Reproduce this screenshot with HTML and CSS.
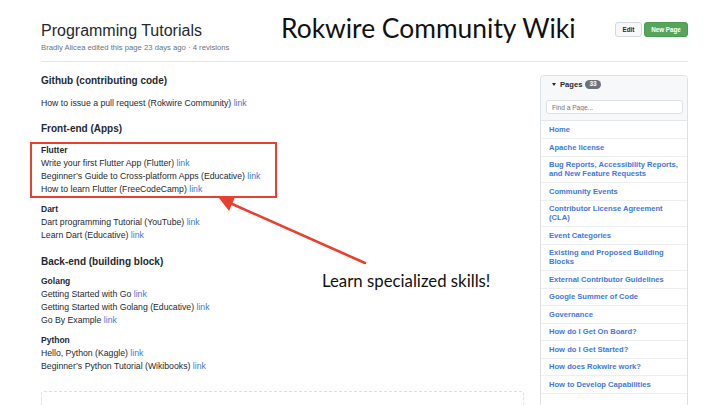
FILE: index.html
```html
<!DOCTYPE html>
<html lang="en">
<head>
<meta charset="utf-8">
<title>Programming Tutorials · Rokwire Community Wiki</title>
<link rel="stylesheet" href="styles.css">
</head>
<body>
<div class="page">
  <header class="head">
    <div class="title-block">
      <h1 class="title">Programming Tutorials</h1>
      <div class="meta">Bradly Alicea edited this page 23 days ago · 4 revisions</div>
    </div>
    <div class="actions">
      <button class="btn">Edit</button>
      <button class="btn btn-green">New Page</button>
    </div>
  </header>

  <div class="layout">
    <main class="content">
      <h2 class="h2 first">Github (contributing code)</h2>
      <p class="line">How to issue a pull request (Rokwire Community) <a href="#">link</a></p>

      <h2 class="h2">Front-end (Apps)</h2>
      <div class="group highlight">
        <div class="gtitle">Flutter</div>
        <div class="line">Write your first Flutter App (Flutter) <a href="#">link</a></div>
        <div class="line">Beginner’s Guide to Cross-platform Apps (Educative) <a href="#">link</a></div>
        <div class="line">How to learn Flutter (FreeCodeCamp) <a href="#">link</a></div>
      </div>
      <div class="group">
        <div class="gtitle">Dart</div>
        <div class="line">Dart programming Tutorial (YouTube) <a href="#">link</a></div>
        <div class="line">Learn Dart (Educative) <a href="#">link</a></div>
      </div>

      <h2 class="h2 back">Back-end (building block)</h2>
      <div class="group">
        <div class="gtitle">Golang</div>
        <div class="line">Getting Started with Go <a href="#">link</a></div>
        <div class="line">Getting Started with Golang (Educative) <a href="#">link</a></div>
        <div class="line">Go By Example <a href="#">link</a></div>
      </div>
      <div class="group py">
        <div class="gtitle">Python</div>
        <div class="line">Hello, Python (Kaggle) <a href="#">link</a></div>
        <div class="line">Beginner’s Python Tutorial (Wikibooks) <a href="#">link</a></div>
      </div>

      <div class="footer-box"></div>
    </main>

    <aside class="sidebar">
      <div class="side-head">
        <div class="pages-row">
          <span class="caret"></span>
          <span class="pages-label">Pages</span>
          <span class="badge">33</span>
        </div>
        <input class="find" type="text" placeholder="Find a Page...">
      </div>
      <ul class="page-list">
        <li><a href="#">Home</a></li>
        <li><a href="#">Apache license</a></li>
        <li><a href="#">Bug Reports, Accessibility Reports, and New Feature Requests</a></li>
        <li><a href="#">Community Events</a></li>
        <li><a href="#">Contributor License Agreement (CLA)</a></li>
        <li><a href="#">Event Categories</a></li>
        <li><a href="#">Existing and Proposed Building Blocks</a></li>
        <li><a href="#">External Contributor Guidelines</a></li>
        <li><a href="#">Google Summer of Code</a></li>
        <li><a href="#">Governance</a></li>
        <li><a href="#">How do I Get On Board?</a></li>
        <li><a href="#">How do I Get Started?</a></li>
        <li><a href="#">How does Rokwire work?</a></li>
        <li><a href="#">How to Develop Capabilities</a></li>
        <li class="blank"></li>
      </ul>
    </aside>
  </div>

  <div class="slide-title">Rokwire Community Wiki</div>
  <svg class="arrow" width="720" height="405" viewBox="0 0 720 405" aria-hidden="true">
    <line x1="365" y1="263" x2="230" y2="203" stroke="#e8402f" stroke-width="2.6" stroke-linecap="round"/>
    <polygon points="219,198 235,197 229,211" fill="#e8402f"/>
  </svg>
  <div class="callout">Learn specialized skills!</div>
</div>
</body>
</html>
```

FILE: styles.css
```css
* { box-sizing: border-box; }
html, body { margin: 0; padding: 0; background: #fff; }
body {
  font-family: "Liberation Sans", Arial, sans-serif;
  color: #24292f;
  width: 720px;
  height: 405px;
  overflow: hidden;
}
.page {
  position: relative;
  height: 405px;
  overflow: hidden;
  padding: 0 32px 0 41px;
}
.head {
  display: flex;
  justify-content: space-between;
  align-items: flex-start;
  padding: 21px 0 8px;
  border-bottom: 1px solid #e4e7ea;
}
.title {
  margin: 0;
  font-size: 16px;
  line-height: 20px;
  font-weight: 400;
  color: #24292f;
}
.meta {
  margin-top: 1px;
  font-size: 7.7px;
  line-height: 11px;
  color: #6a737d;
}
.actions {
  display: flex;
  gap: 2px;
  margin-top: 1px;
}
.btn {
  height: 15px;
  padding: 0 6px;
  font-family: "Liberation Sans", Arial, sans-serif;
  font-size: 6.3px;
  font-weight: 700;
  border: 1px solid #d5d9dd;
  border-radius: 3px;
  background: #f6f8fa;
  color: #24292f;
  width: 27px;
}
.btn-green {
  width: 44px;
  background: #55a65b;
  border-color: #4c9a52;
  color: #fff;
}
.layout {
  display: flex;
  gap: 16px;
}
.content { flex: 1; min-width: 0; }
.h2 {
  margin: 11px 0 0;
  font-size: 10px;
  line-height: 16px;
  font-weight: 700;
  color: #24292f;
}
.h2.first { margin-top: 11px; }
.line {
  margin: 0;
  font-size: 8.7px;
  line-height: 13px;
  color: #24292f;
  white-space: nowrap;
}
p.line { margin-top: 8px; }
.line a, .page-list a {
  color: #3f78dc;
  text-decoration: none;
}
.group { margin-top: 5px; }
.gtitle {
  font-size: 8.5px;
  line-height: 13px;
  font-weight: 700;
}
.highlight {
  margin-top: 5px;
  margin-left: -11px;
  padding-left: 9px;
  width: 247px;
  border: 2px solid #e8402f;
}
.h2.back { margin-top: 12px; }
.group.py { margin-top: 7px; }
.footer-box {
  margin-top: 18px;
  height: 40px;
  border: 1px dashed #dde1e5;
  border-radius: 3px;
}
.sidebar {
  width: 148px;
  flex: 0 0 148px;
  margin-top: 13px;
  border: 1px solid #dde1e5;
  border-radius: 4px;
  overflow: hidden;
}
.side-head {
  background: #f6f8fa;
  padding: 3px 4px 6px 5px;
  border-bottom: 1px solid #e4e7ea;
}
.pages-row {
  display: flex;
  align-items: center;
  height: 11px;
  padding-left: 6px;
  gap: 3px;
}
.caret {
  width: 0;
  height: 0;
  border-left: 2.5px solid transparent;
  border-right: 2.5px solid transparent;
  border-top: 3px solid #24292f;
  margin-right: 1px;
}
.pages-label {
  font-size: 7.6px;
  font-weight: 700;
  color: #24292f;
}
.badge {
  display: inline-block;
  height: 8.5px;
  line-height: 8.5px;
  padding: 0 4px;
  border-radius: 5px;
  background: #6a737d;
  color: #fff;
  font-size: 6.5px;
  font-weight: 700;
}
.find {
  display: block;
  width: 100%;
  height: 14px;
  margin-top: 10px;
  padding: 0 5px;
  font-family: "Liberation Sans", Arial, sans-serif;
  font-size: 6.6px;
  border: 1px solid #dde1e5;
  border-radius: 3px;
  background: #fff;
  color: #24292f;
  outline: none;
}
.find::placeholder { color: #6a737d; }
.page-list {
  list-style: none;
  margin: 0;
  padding: 0;
}
.page-list li {
  padding: 3.75px 8px;
  font-size: 7.6px;
  line-height: 9px;
  font-weight: 700;
  border-top: 1px solid #eceff2;
}
.page-list li:first-child { border-top: none; padding-top: 4.25px; }
.page-list li.blank { height: 20px; }
.slide-title {
  position: absolute;
  left: 281px;
  top: 12px;
  font-family: Lato, "Open Sans", sans-serif;
  font-size: 26.4px;
  line-height: 32px;
  color: #111;
  white-space: nowrap;
}
.arrow {
  position: absolute;
  left: 0;
  top: 0;
  pointer-events: none;
}
.callout {
  position: absolute;
  left: 322px;
  top: 270px;
  font-family: Lato, "Open Sans", sans-serif;
  font-size: 16.8px;
  line-height: 22px;
  color: #111;
  white-space: nowrap;
}
```
